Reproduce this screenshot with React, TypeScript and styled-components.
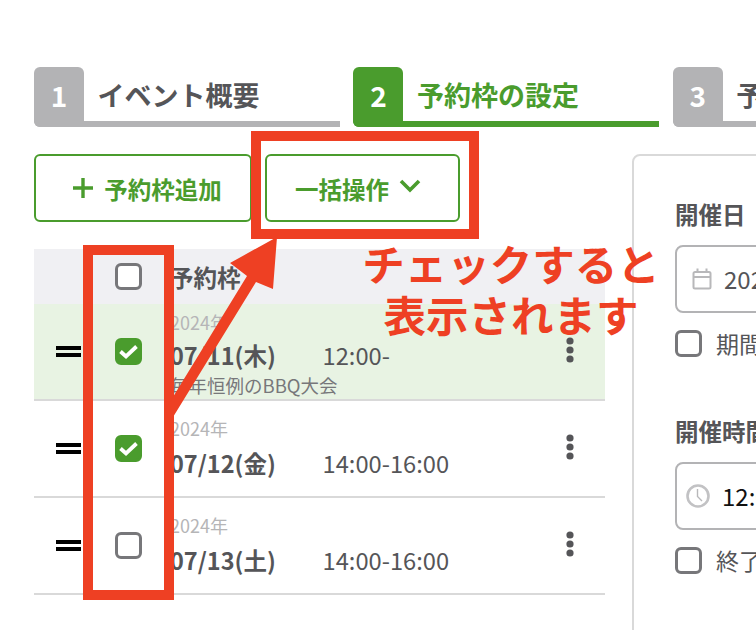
import React from "react";
import styled, { createGlobalStyle } from "styled-components";

const GREEN = "#4a9c2d";
const GRAY = "#b3b3b5";
const TEXT = "#555558";
const RED = "#ee4023";
const LINE = "#d9d9d9";

const GlobalStyle = createGlobalStyle`
    html, body {
        margin: 0;
        padding: 0;
        background: #fff;
    }
    body {
        font-family: "Noto Sans CJK JP", "Noto Sans", sans-serif;
        color: ${TEXT};
    }
`;

const Page = styled.div`
    position: relative;
    width: 756px;
    height: 630px;
    overflow: hidden;
    padding: 67px 0 0 34px;
    box-sizing: border-box;
`;

const Tabs = styled.div`
    display: flex;
    gap: 13.4px;
    width: 1000px;
`;

const Tab = styled.div<{ $active?: boolean }>`
    display: flex;
    width: 306px;
    height: 60px;
    flex-shrink: 0;
    box-sizing: border-box;
    border-bottom: 6px solid ${(p) => (p.$active ? GREEN : GRAY)};
    border-bottom-left-radius: 6px;
    color: ${(p) => (p.$active ? GREEN : TEXT)};
`;

const TabNumber = styled.div<{ $active?: boolean }>`
    width: 50px;
    height: 60px;
    flex-shrink: 0;
    display: flex;
    align-items: center;
    justify-content: center;
    background: ${(p) => (p.$active ? GREEN : GRAY)};
    border-radius: 6px 6px 0 6px;
    color: #fff;
    font-size: 28px;
    font-weight: 700;
    line-height: 1;
    padding-bottom: 4px;
    box-sizing: border-box;
`;

const TabLabel = styled.div`
    height: 54px;
    margin-left: 13.5px;
    display: flex;
    align-items: center;
    font-size: 27px;
    font-weight: 700;
    line-height: 1;
    white-space: nowrap;
`;

const Content = styled.div`
    display: flex;
    margin-top: 27px;
    width: 1000px;
`;

const LeftColumn = styled.div`
    width: 571px;
    flex-shrink: 0;
`;

const Actions = styled.div`
    display: flex;
    gap: 13px;
`;

const ActionButton = styled.button<{ $width: number; $left?: number; $right?: number }>`
    width: ${(p) => p.$width}px;
    height: 68px;
    display: flex;
    align-items: center;
    justify-content: center;
    gap: 10px;
    padding: 3px ${(p) => p.$right ?? 0}px 0 ${(p) => p.$left ?? 0}px;
    background: #fff;
    border: 2px solid ${GREEN};
    border-radius: 6px;
    color: ${GREEN};
    font-family: inherit;
    font-size: 23.5px;
    font-weight: 700;
    line-height: 1;
`;

const TableHead = styled.div`
    display: flex;
    align-items: center;
    height: 55px;
    margin-top: 27px;
    background: #f0f0f3;
    padding-left: 81px;
`;

const HeadLabel = styled.div`
    margin-left: 28px;
    font-size: 23.5px;
    font-weight: 700;
    line-height: 1;
    padding-top: 3px;
`;

const Row = styled.div<{ $selected?: boolean }>`
    display: flex;
    align-items: center;
    height: 97px;
    box-sizing: border-box;
    border-bottom: 2px solid ${LINE};
    background: ${(p) => (p.$selected ? "#e8f3e3" : "#fff")};
    padding-left: 22px;
`;

const DragHandle = styled.div`
    width: 25px;
    height: 11px;
    box-sizing: border-box;
    flex-shrink: 0;
    margin-right: 34px;
    border-top: 4px solid #000;
    border-bottom: 4px solid #000;
`;

const CheckBox = styled.div<{ $checked?: boolean }>`
    width: 27px;
    height: 27px;
    flex-shrink: 0;
    box-sizing: border-box;
    display: flex;
    align-items: center;
    justify-content: center;
    border-radius: 6px;
    border: 3px solid ${(p) => (p.$checked ? GREEN : "#77777a")};
    background: ${(p) => (p.$checked ? GREEN : "#fff")};
`;

const RowBody = styled.div<{ $compact?: boolean }>`
    margin-left: 28px;
    flex: 1;
    height: 100%;
    padding-top: ${(p) => (p.$compact ? 7 : 16)}px;
    box-sizing: border-box;
`;

const Year = styled.div`
    font-size: 18px;
    line-height: 22px;
    color: #b5b5b7;
`;

const DateLine = styled.div<{ $compact?: boolean }>`
    display: flex;
    align-items: center;
    height: 40px;
    margin-top: ${(p) => (p.$compact ? 3 : 5)}px;
`;

const DateText = styled.div`
    width: 152.5px;
    font-size: 23.5px;
    font-weight: 700;
    line-height: 1;
`;

const TimeText = styled.div`
    font-size: 23.7px;
    line-height: 1;
`;

const Note = styled.div`
    font-size: 18.5px;
    line-height: 18px;
    margin-top: 0;
    color: #77777a;
    white-space: nowrap;
`;

const MoreButton = styled.div`
    width: 70px;
    flex-shrink: 0;
    display: flex;
    justify-content: center;
    margin-top: -3px;
`;

const Panel = styled.div`
    width: 300px;
    height: 520px;
    margin-left: 27px;
    box-sizing: border-box;
    border: 2px solid ${LINE};
    border-radius: 8px;
    padding: 45px 0 0 41px;
`;

const FieldLabel = styled.div`
    font-size: 23.5px;
    font-weight: 700;
    line-height: 26px;
    white-space: nowrap;
`;

const Field = styled.div<{ $inset: number }>`
    display: flex;
    align-items: center;
    height: 68px;
    margin-top: 18px;
    box-sizing: border-box;
    border: 2px solid ${GRAY};
    border-radius: 8px;
    padding-left: ${(p) => p.$inset}px;
    gap: 12px;
`;

const FieldValue = styled.div<{ $dark?: boolean }>`
    font-size: 24px;
    line-height: 1;
    color: ${(p) => (p.$dark ? "#111" : TEXT)};
`;

const CheckLine = styled.div`
    display: flex;
    align-items: center;
    gap: 14px;
    margin-top: 17px;
    font-size: 23px;
    line-height: 27px;
    color: ${TEXT};
`;

const FieldGroup = styled.div`
    margin-top: 61px;
`;

const Highlight = styled.div`
    position: absolute;
    box-sizing: border-box;
    border: 10px solid ${RED};
    pointer-events: none;
`;

const ButtonHighlight = styled(Highlight)`
    left: 251px;
    top: 131px;
    width: 228px;
    height: 108px;
`;

const ColumnHighlight = styled(Highlight)`
    left: 83px;
    top: 245px;
    width: 91px;
    height: 355px;
`;

const Arrow = styled.svg`
    position: absolute;
    left: 160px;
    top: 230px;
    width: 130px;
    height: 200px;
`;

const Annotation = styled.div`
    position: absolute;
    left: 361px;
    top: 237px;
    width: 300px;
    text-align: center;
    color: ${RED};
    font-size: 42.5px;
    font-weight: 700;
    line-height: 51px;
    white-space: nowrap;
`;

const Tick = () => (
    <svg width="21" height="21" viewBox="0 0 21 21" style={{ flexShrink: 0 }}>
        <path d="M2.5 10.5 L8 15.5 L18.5 5.5" fill="none" stroke="#fff" strokeWidth="3.8" />
    </svg>
);

const Dots = () => (
    <svg width="10" height="28" viewBox="0 0 10 28">
        <circle cx="5" cy="5" r="3.6" fill={TEXT} />
        <circle cx="5" cy="14" r="3.6" fill={TEXT} />
        <circle cx="5" cy="23" r="3.6" fill={TEXT} />
    </svg>
);

const PlusIcon = () => (
    <svg width="22" height="22" viewBox="0 0 22 22" style={{ marginBottom: 3 }}>
        <path d="M11 1 V21 M1 11 H21" stroke={GREEN} strokeWidth="3.4" fill="none" />
    </svg>
);

const ChevronIcon = () => (
    <svg width="22" height="14" viewBox="0 0 22 14" style={{ marginBottom: 7 }}>
        <path d="M2 2 L11 11 L20 2" stroke={GREEN} strokeWidth="3.6" fill="none" />
    </svg>
);

const CalendarIcon = () => (
    <svg width="20" height="24" viewBox="0 0 20 24" style={{ flexShrink: 0 }}>
        <path
            d="M1.5 6.5 a1.5 1.5 0 0 1 1.5 -1.5 H17 a1.5 1.5 0 0 1 1.5 1.5 V20 a1.5 1.5 0 0 1 -1.5 1.5 H3 a1.5 1.5 0 0 1 -1.5 -1.5 Z M1.5 10 H18.5 M5.5 1.5 V5 M14.5 1.5 V5"
            fill="none"
            stroke="#b8b8ba"
            strokeWidth="2"
        />
    </svg>
);

const ClockIcon = () => (
    <svg width="24" height="24" viewBox="0 0 24 24" style={{ flexShrink: 0 }}>
        <circle cx="12" cy="12" r="10.5" fill="none" stroke="#c2c2c4" strokeWidth="2.6" />
        <path d="M11.5 5 V12.5 L16 17" fill="none" stroke="#b8b8ba" strokeWidth="1.4" />
    </svg>
);

const slots = [
    { date: "07/11(木)", time: "12:00-", note: "毎年恒例のBBQ大会", checked: true, selected: true },
    { date: "07/12(金)", time: "14:00-16:00", checked: true },
    { date: "07/13(土)", time: "14:00-16:00" },
];

export default function App() {
    return (
        <Page>
            <GlobalStyle />
            <Tabs>
                <Tab>
                    <TabNumber>1</TabNumber>
                    <TabLabel>イベント概要</TabLabel>
                </Tab>
                <Tab $active>
                    <TabNumber $active>2</TabNumber>
                    <TabLabel>予約枠の設定</TabLabel>
                </Tab>
                <Tab>
                    <TabNumber>3</TabNumber>
                    <TabLabel>予約フォーム</TabLabel>
                </Tab>
            </Tabs>
            <Content>
                <LeftColumn>
                    <Actions>
                        <ActionButton $width={218} $left={8}>
                            <PlusIcon />
                            予約枠追加
                        </ActionButton>
                        <ActionButton $width={195} $right={9}>
                            一括操作
                            <ChevronIcon />
                        </ActionButton>
                    </Actions>
                    <TableHead>
                        <CheckBox />
                        <HeadLabel>予約枠</HeadLabel>
                    </TableHead>
                    {slots.map((slot) => (
                        <Row key={slot.date} $selected={slot.selected}>
                            <DragHandle />
                            <CheckBox $checked={slot.checked}>{slot.checked && <Tick />}</CheckBox>
                            <RowBody $compact={!!slot.note}>
                                <Year>2024年</Year>
                                <DateLine $compact={!!slot.note}>
                                    <DateText>{slot.date}</DateText>
                                    <TimeText>{slot.time}</TimeText>
                                </DateLine>
                                {slot.note && <Note>{slot.note}</Note>}
                            </RowBody>
                            <MoreButton>
                                <Dots />
                            </MoreButton>
                        </Row>
                    ))}
                </LeftColumn>
                <Panel>
                    <FieldLabel>開催日</FieldLabel>
                    <Field $inset={15}>
                        <CalendarIcon />
                        <FieldValue>2024/07/11</FieldValue>
                    </Field>
                    <CheckLine>
                        <CheckBox />
                        期間で設定する
                    </CheckLine>
                    <FieldGroup>
                        <FieldLabel>開催時間</FieldLabel>
                        <Field $inset={9}>
                            <ClockIcon />
                            <FieldValue $dark>12:00</FieldValue>
                        </Field>
                        <CheckLine>
                            <CheckBox />
                            終了時間を設定する
                        </CheckLine>
                    </FieldGroup>
                </Panel>
            </Content>
            <ButtonHighlight />
            <ColumnHighlight />
            <Arrow viewBox="0 0 130 200">
                <path d="M5 180 L87 46 L70 33 L117 7 L113 59 L96 52 L10 192 Z" fill={RED} />
            </Arrow>
            <Annotation>
                チェックすると
                <br />
                表示されます
            </Annotation>
        </Page>
    );
}
